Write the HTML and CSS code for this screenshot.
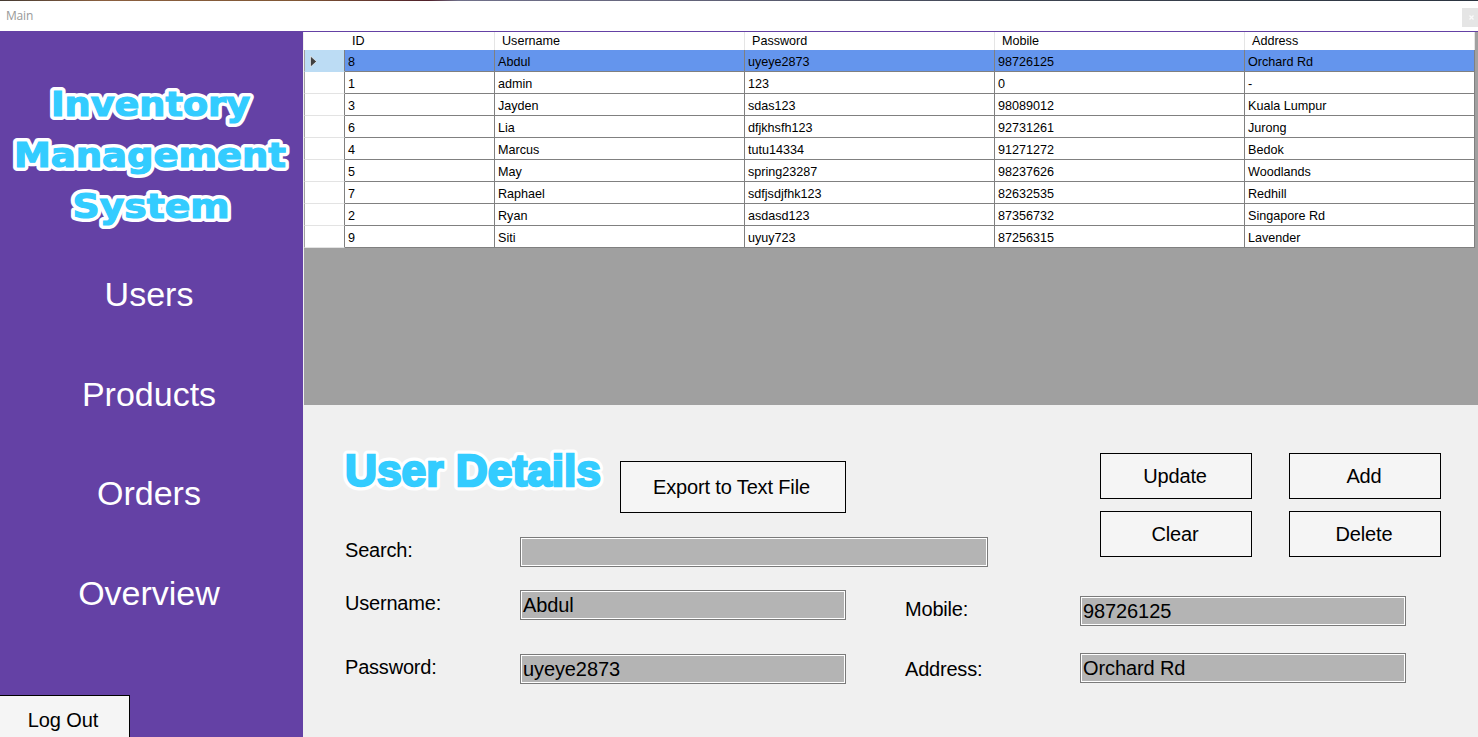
FILE: index.html
```html
<!DOCTYPE html>
<html lang="en">
<head>
<meta charset="utf-8">
<title>Main</title>
<link rel="stylesheet" href="styles.css">
</head>
<body>
<header class="titlebar"><span class="caption">Main</span><span class="close"><svg width="5" height="5" viewBox="0 0 5 5"><path d="M.5 .5L4.5 4.5M4.5 .5L.5 4.5" stroke="#fafafa" stroke-width="1.3"/></svg></span></header>
<div class="app">
  <aside class="sidebar">
    <svg class="logo" width="303" height="216" viewBox="0 32 303 216">
      <g class="art outline"><use href="#logo-text"/></g>
      <g class="art face"><g id="logo-text">
        <text x="51" y="115.500" textLength="199" lengthAdjust="spacingAndGlyphs">Inventory</text>
        <text x="14" y="166.500" textLength="272" lengthAdjust="spacingAndGlyphs">Management</text>
        <text x="72.500" y="217.500" textLength="157" lengthAdjust="spacingAndGlyphs">System</text>
      </g></g>
    </svg>
    <nav class="nav"><a>Users</a><a>Products</a><a>Orders</a><a>Overview</a></nav>
    <button class="btn logout">Log Out</button>
  </aside>
  <main class="main">
    <section class="gridview">
      <div class="row head"><span></span><span>ID</span><span>Username</span><span>Password</span><span>Mobile</span><span>Address</span></div>
      <div class="row selected"><span><svg width="7" height="11" viewBox="0 0 7 11"><path d="M.5 0L6.5 5.5L.5 11Z" fill="#404040" stroke="#fff" stroke-width=".6"/></svg></span><span>8</span><span>Abdul</span><span>uyeye2873</span><span>98726125</span><span>Orchard Rd</span></div>
      <div class="row"><span></span><span>1</span><span>admin</span><span>123</span><span>0</span><span>-</span></div>
      <div class="row"><span></span><span>3</span><span>Jayden</span><span>sdas123</span><span>98089012</span><span>Kuala Lumpur</span></div>
      <div class="row"><span></span><span>6</span><span>Lia</span><span>dfjkhsfh123</span><span>92731261</span><span>Jurong</span></div>
      <div class="row"><span></span><span>4</span><span>Marcus</span><span>tutu14334</span><span>91271272</span><span>Bedok</span></div>
      <div class="row"><span></span><span>5</span><span>May</span><span>spring23287</span><span>98237626</span><span>Woodlands</span></div>
      <div class="row"><span></span><span>7</span><span>Raphael</span><span>sdfjsdjfhk123</span><span>82632535</span><span>Redhill</span></div>
      <div class="row"><span></span><span>2</span><span>Ryan</span><span>asdasd123</span><span>87356732</span><span>Singapore Rd</span></div>
      <div class="row"><span></span><span>9</span><span>Siti</span><span>uyuy723</span><span>87256315</span><span>Lavender</span></div>
    </section>
    <section class="details">
      <div class="left">
        <div class="heading">
          <svg class="title" width="275" height="60" viewBox="345 445 275 60">
            <g class="art outline big"><use href="#title-text"/></g>
            <g class="art face big"><text id="title-text" x="345" y="486" textLength="256" lengthAdjust="spacingAndGlyphs">User Details</text></g>
          </svg>
          <button class="btn export">Export to Text File</button>
        </div>
        <div class="field search"><label>Search:</label><div class="input wide"></div></div>
        <div class="field username"><label>Username:</label><div class="input">Abdul</div></div>
        <div class="field password"><label>Password:</label><div class="input">uyeye2873</div></div>
      </div>
      <div class="right">
        <div class="actions"><button class="btn">Update</button><button class="btn">Add</button><button class="btn">Clear</button><button class="btn">Delete</button></div>
        <div class="field mobile"><label>Mobile:</label><div class="input">98726125</div></div>
        <div class="field address"><label>Address:</label><div class="input">Orchard Rd</div></div>
      </div>
    </section>
  </main>
</div>
</body>
</html>
```
FILE: styles.css
```css
* { box-sizing: border-box; }
body { margin: 0; width: 1478px; height: 737px; overflow: hidden; font-family: "Liberation Sans", Arial, sans-serif; color: #000; background: #f0f0f0; }
.titlebar { height: 31px; background: linear-gradient(90deg, #453a32, #8b6040 7%, #805735 20%, #50202a 29%, #70708a 31%, #66667d 45%, #3c4350 70%, #2b3440) top / 100% 1px no-repeat #fff; display: flex; justify-content: space-between; }
.caption { font: 12px/15px "Open Sans", sans-serif; letter-spacing: -.2px; color: #999; padding: 8px 0 0 6px; }
.close { width: 16px; height: 19px; margin-top: 8px; background: #e5e5e5; display: flex; align-items: center; justify-content: center; padding-left: 3px; }
.app { display: flex; height: 706px; border-top: 1px solid #6441a5; }
.sidebar { width: 303px; background: #6441a5; display: flex; flex-direction: column; }
.logo { display: block; flex: none; }
.art { font-family: "DejaVu Sans", sans-serif; font-weight: 700; font-size: 34px; stroke-linejoin: round; }
.outline { fill: #fff; stroke: #fff; stroke-width: 8px; }
.face { fill: #33ccff; stroke: #33ccff; stroke-width: 1.2px; stroke-linejoin: miter; }
.big { font-family: "Liberation Sans", Arial, sans-serif; font-size: 44px; }
.face.big { stroke-width: 2.4px; }
.outline.big { stroke-width: 9px; }
.nav { display: flex; flex-direction: column; width: 298px; }
.nav a { height: 99.5px; line-height: 93px; text-align: center; font-size: 34px; color: #fff; }
.btn { font: 20px/24px "Liberation Sans", Arial, sans-serif; letter-spacing: -.15px; color: #000; background: #f5f5f5; border: 1px solid #000; border-radius: 0; padding: 0; }
.logout { width: 130px; height: 42px; margin-top: auto; border-left: 0; border-bottom: 0; padding: 6px 3px 0 0; letter-spacing: -.1px; }
.main { flex: 1; border-left: 1px solid #f0f0f0; }
.gridview { height: 373px; background: #a0a0a0; font-size: 12.6px; }
.row { display: grid; grid-template-columns: 41px 150px 250px 250px 250px 230px; width: 1171px; height: 22px; }
.row span { height: 22px; background: #fff; border-right: 1px solid #808080; border-bottom: 1px solid #808080; padding: 4px 0 0 3px; line-height: 17px; white-space: nowrap; }
.row span:first-child { border-left: 1px solid #a0a0a0; border-bottom-color: #e3e3e3; padding: 1px 0 0 5px; display: flex; align-items: center; }
.row.selected span { background: #6495ed; }
.row.selected span:first-child { background: #bcdcf4; border-bottom-color: #bcdcf4; }
.row.head { height: 18px; }
.row.head span { height: 18px; border-bottom: 0; border-color: #e5e5e5; padding: 0 0 0 7px; line-height: 18px; }
.row.head span:first-child { border-color: #fff; }
.details { display: flex; height: 333px; padding-left: 41px; background: #f0f0f0; font-size: 20px; }
.left { width: 560px; padding-top: 40px; }
.heading { display: flex; height: 92px; }
.title { overflow: visible; flex: none; }
.export { width: 226px; height: 52px; margin-top: 16px; padding-right: 3px; }
.field { display: flex; height: 30px; }
.field label { width: 175px; flex: none; line-height: 26px; letter-spacing: -.2px; }
.input { width: 326px; flex: none; border: 1px solid #7a7a7a; box-shadow: inset 0 0 0 1px #fff; background: #b4b4b4; padding-left: 2px; line-height: 28px; letter-spacing: -.1px; }
.wide { width: 468px; }
.username { margin-top: 23px; }
.password { margin-top: 34px; }
.right { padding-top: 48px; }
.actions { display: grid; grid-template: 46px 46px / 152px 152px; gap: 12px 37px; margin-left: 195px; }
.actions .btn { padding-right: 2px; }
.mobile { margin-top: 39px; }
.address { margin-top: 27px; }
.address label { line-height: 32px; }
```
